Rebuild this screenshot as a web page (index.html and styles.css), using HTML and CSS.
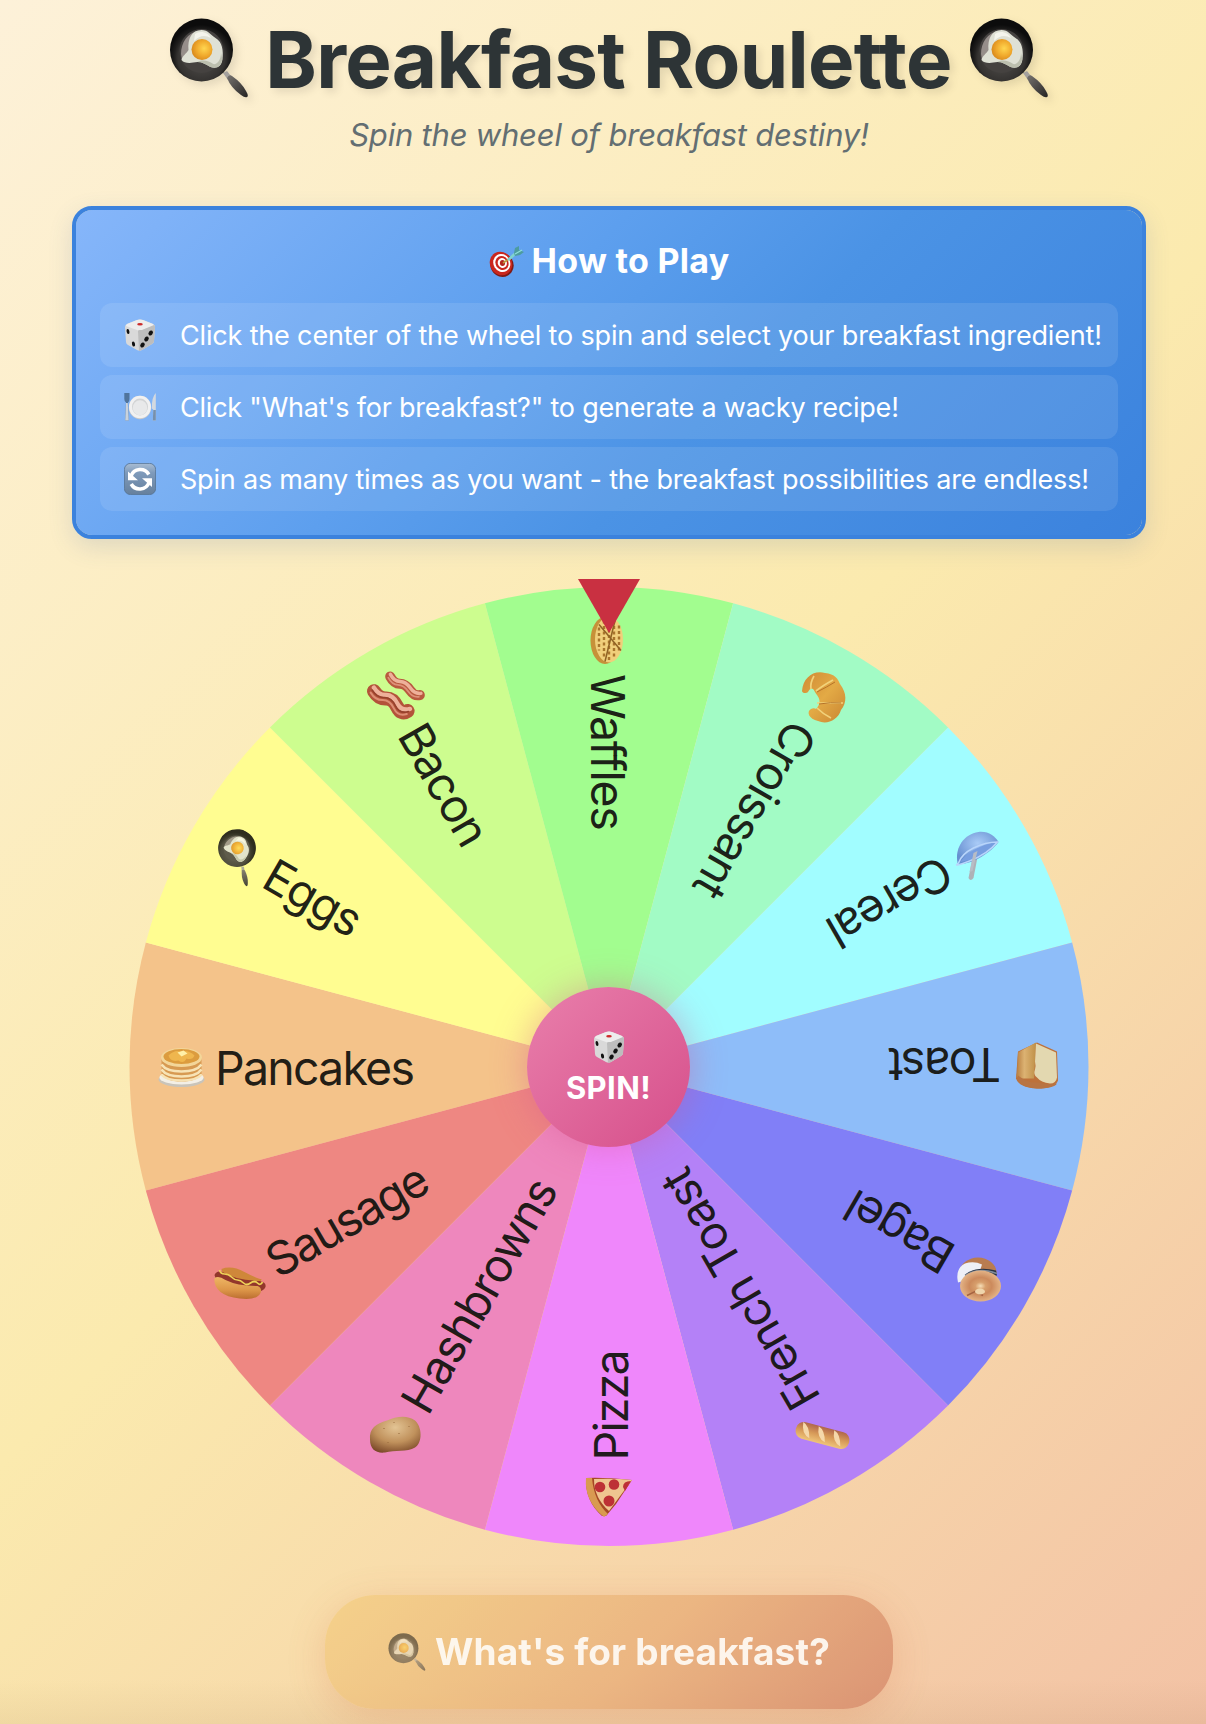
FILE: index.html
```html
<!DOCTYPE html>
<html lang="en">
<head>
<meta charset="utf-8">
<title>Breakfast Roulette</title>
<link rel="stylesheet" href="styles.css">
</head>
<body>
<svg class="sprite" aria-hidden="true">
  <defs>
    <radialGradient id="yolk" cx=".6" cy=".45" r=".6"><stop offset="0" stop-color="#ffd650"/><stop offset=".6" stop-color="#f0a92c"/><stop offset="1" stop-color="#d98a1e"/></radialGradient>
    <radialGradient id="iron" cx=".5" cy=".62" r=".52"><stop offset="0" stop-color="#55524f"/><stop offset=".72" stop-color="#353331"/><stop offset=".84" stop-color="#1f1e1d"/><stop offset="1" stop-color="#0c0c0c"/></radialGradient>
    <linearGradient id="blueTile" x1="0" y1="0" x2="0" y2="1"><stop offset="0" stop-color="#a9bdd3"/><stop offset=".3" stop-color="#7e9abb"/><stop offset="1" stop-color="#66809d"/></linearGradient>
    <linearGradient id="crust" x1="0" y1="0" x2="1" y2="1"><stop offset="0" stop-color="#d08a34"/><stop offset=".5" stop-color="#e3aa45"/><stop offset="1" stop-color="#c98532"/></linearGradient>
    <radialGradient id="brolly" cx=".5" cy=".35" r=".6"><stop offset="0" stop-color="#a9cbf7"/><stop offset="1" stop-color="#668fd0"/></radialGradient>
    <radialGradient id="spud" cx=".5" cy=".3" r=".75"><stop offset="0" stop-color="#e3c494"/><stop offset=".55" stop-color="#c0915c"/><stop offset="1" stop-color="#7a4828"/></radialGradient>
    <radialGradient id="bagelTop" cx=".5" cy=".5" r=".5"><stop offset="0" stop-color="#f6dfb8"/><stop offset=".25" stop-color="#d79f6c"/><stop offset=".55" stop-color="#cc8a5c"/><stop offset="1" stop-color="#e4b487"/></radialGradient>
    <linearGradient id="loaf" x1="0" y1="0" x2="0" y2="1"><stop offset="0" stop-color="#b0674a"/><stop offset=".5" stop-color="#d79a58"/><stop offset="1" stop-color="#efc479"/></linearGradient>
    <linearGradient id="bun" x1="0" y1="0" x2="0" y2="1"><stop offset="0" stop-color="#efb765"/><stop offset=".6" stop-color="#dc9548"/><stop offset="1" stop-color="#bb6d30"/></linearGradient>
    <linearGradient id="side" x1="0" y1="0" x2="1" y2="0"><stop offset="0" stop-color="#b87f42"/><stop offset=".4" stop-color="#dcb272"/><stop offset="1" stop-color="#bf9048"/></linearGradient>
    <linearGradient id="grip" x1="0" y1="0" x2="1" y2="1"><stop offset="0" stop-color="#77736f"/><stop offset="1" stop-color="#242323"/></linearGradient>
  </defs>

  <symbol id="pan" viewBox="0 0 80 80">
    <path d="M54 55l4-2 4 5-3 4z" fill="#a3a09d"/>
    <path d="M58 60q2-4 5-2 10 7 14 15 3 5 1 6-2 1-6-2-10-7-14-17z" fill="url(#grip)"/>
    <circle cx="32.500" cy="32" r="31.500" fill="url(#iron)"/>
    <circle cx="32.500" cy="33" r="22" fill="#454240"/>
    <path d="M12 36c0-12 7-21 17-23-7 6-7 10-8 17-1 5-6 7-8 12z" fill="#968e8a"/>
    <path d="M12.500 42c1-5 5-6 7-10-1-11 3-20 13-20 7 0 9 5 14 8 7 4 8 13 7 21-1 8-6 10-12 8-5-3-8-5-13-5-6 1-13 2-16-2z" fill="#dfe1d5"/>
    <path d="M26 16c5-4 13-2 16 4-6-3-11-3-17 3z" fill="#f5f5ed"/>
    <path d="M44 46c4 1 8-4 8-11l1.300 6c-1 8-6 10-12 8-5-3-8-5-13-5 6-3 11-1 16 2z" fill="#bcbfae"/>
    <circle cx="33" cy="31.500" r="10.500" fill="url(#yolk)"/>
  </symbol>

  <symbol id="die" viewBox="0 0 32 32">
    <path d="M1 8Q1 6 3 5L13 1q3-1 6 0l10 4q2 1 2 3l-1 14q0 2-2 3l-10 6q-3 1-5 0L4 26q-2-1-2-3z" fill="#d9d9d9"/>
    <path d="M2 7q0-1 1-2L13 1q3-1 6 0l10 4q1 1 1 2L18 11q-3 1-5 0z" fill="#ededed"/>
    <path d="M14 12q0-1 2-1l2 0 12-5q1 1 1 2l-1 14q0 2-2 3l-10 6-3 1z" fill="#bdbdbd"/>
    <ellipse cx="16" cy="5.300" rx="2.800" ry="1.300" fill="#cc2b2b"/>
    <ellipse cx="4" cy="12.500" rx="1.400" ry="2.500" fill="#111" transform="rotate(-12 4 12.500)"/>
    <ellipse cx="9.500" cy="25" rx="1.500" ry="2.600" fill="#111" transform="rotate(-15 9.500 25)"/>
    <ellipse cx="26.700" cy="14" rx="2" ry="2.700" fill="#111" transform="rotate(35 26.700 14)"/>
    <ellipse cx="22.500" cy="20" rx="2" ry="2.700" fill="#111" transform="rotate(35 22.500 20)"/>
    <ellipse cx="18.500" cy="26" rx="2" ry="2.700" fill="#111" transform="rotate(35 18.500 26)"/>
  </symbol>

  <symbol id="plate" viewBox="0 0 32 32">
    <path d="M.3 2h5.200v6q0 2.500-1.500 3.500l.8 18H1.200L2 11.500Q.3 10.500.3 8z" fill="#50749c"/>
    <path d="M2 12h1.800l1 17.500H1.200z" fill="#c9d2dc"/>
    <path d="M31.800 2v27.500h-3l.5-11-1.500-1q0-12 4-15.500z" fill="#d3d9e0"/>
    <path d="M31.800 19v10.500h-3l.5-10.500z" fill="#7690ad"/>
    <ellipse cx="16" cy="16.500" rx="11.200" ry="11.800" fill="#c9c9c9"/>
    <ellipse cx="16" cy="16" rx="11" ry="11.300" fill="#f1f1f1"/>
    <ellipse cx="16" cy="16" rx="8" ry="8.500" fill="#d2d4d5"/>
    <ellipse cx="16" cy="16.700" rx="7.200" ry="7.500" fill="#e8e9ea"/>
  </symbol>

  <symbol id="refresh" viewBox="0 0 32 32">
    <rect x=".4" y=".4" width="31.200" height="31.200" rx="6" fill="url(#blueTile)" stroke="#56718e" stroke-width=".8"/>
    <path d="M7 13A9.800 9.800 0 0 1 24.800 11.500" fill="none" stroke="#fff" stroke-width="3.600"/>
    <path d="M25 19.500A9.800 9.800 0 0 1 7.200 21" fill="none" stroke="#fff" stroke-width="3.600"/>
    <path d="M4 8.500V17.300H14z" fill="#fff"/>
    <path d="M28 24V15.200H18z" fill="#fff"/>
  </symbol>

  <symbol id="target" viewBox="0 0 35 31">
    <ellipse cx="13" cy="19" rx="11.500" ry="12" fill="#7f1a15" transform="rotate(-30 13 19)"/>
    <ellipse cx="12" cy="17.500" rx="11" ry="12" fill="#c9271d" transform="rotate(-30 12 17.500)"/>
    <ellipse cx="12.800" cy="17" rx="8.300" ry="9.300" fill="#fff" transform="rotate(-30 12.800 17)"/>
    <ellipse cx="13" cy="17" rx="6.400" ry="7.200" fill="#c9271d" transform="rotate(-30 13 17)"/>
    <ellipse cx="13.300" cy="17" rx="4.500" ry="5" fill="#fff" transform="rotate(-30 13.300 17)"/>
    <ellipse cx="13.500" cy="17" rx="2.600" ry="3" fill="#b3271f"/>
    <path d="M14 17l6-4" stroke="#bd9a3d" stroke-width="1.600"/>
    <path d="M18 13l8-7 2 2-8 7z" fill="#7fd3cf"/>
    <path d="M25 7l1-5 4-2 0 4 5 2-4 3-5 1z" fill="#4d9c9f"/>
    <path d="M26 8l7-4" stroke="#8de0d8" stroke-width="1.200"/>
  </symbol>
</svg>

<main class="page">
  <header class="header">
    <h1 class="title">
      <svg class="title-icon"><use href="#pan"/></svg>
      <span class="title-text">Breakfast Roulette</span>
      <svg class="title-icon"><use href="#pan"/></svg>
    </h1>
    <p class="subtitle">Spin the wheel of breakfast destiny!</p>
  </header>

  <section class="guide">
    <h2 class="guide-title"><svg class="guide-target"><use href="#target"/></svg><span>How to Play</span></h2>
    <ul class="steps">
      <li class="step"><svg class="step-icon"><use href="#die"/></svg><span class="step-one">Click the center of the wheel to spin and select your breakfast ingredient!</span></li>
      <li class="step"><svg class="step-icon"><use href="#plate"/></svg><span class="step-two">Click "What's for breakfast?" to generate a wacky recipe!</span></li>
      <li class="step"><svg class="step-icon"><use href="#refresh"/></svg><span class="step-three">Spin as many times as you want - the breakfast possibilities are endless!</span></li>
    </ul>
  </section>

  <section class="wheel">
    <svg class="wheel-disc" viewBox="-480 -479.500 960 959">
      <defs><path id="slice" d="M0 0L-463.160 124.100A479.500 479.500 0 0 1-463.160-124.100z"/></defs>
      <use href="#slice" fill="#f4c38a"/>
      <use href="#slice" fill="#fffd91" transform="rotate(30)"/>
      <use href="#slice" fill="#cdfd8f" transform="rotate(60)"/>
      <use href="#slice" fill="#a2fd8f" transform="rotate(90)"/>
      <use href="#slice" fill="#a2fbc5" transform="rotate(120)"/>
      <use href="#slice" fill="#a1fdff" transform="rotate(150)"/>
      <use href="#slice" fill="#8ebdf9" transform="rotate(180)"/>
      <use href="#slice" fill="#817ff7" transform="rotate(210)"/>
      <use href="#slice" fill="#b481f7" transform="rotate(240)"/>
      <use href="#slice" fill="#ef87fb" transform="rotate(270)"/>
      <use href="#slice" fill="#ee87bd" transform="rotate(300)"/>
      <use href="#slice" fill="#ee8782" transform="rotate(330)"/>

      <g class="labels">
        <text class="tight" x="-394" y="18.500">Pancakes</text>
        <text x="-393" y="18.500" transform="rotate(30)">Eggs</text>
        <text x="-393" y="18.500" transform="rotate(60)">Bacon</text>
        <text x="-392.500" y="18.500" transform="rotate(90)">Waffles</text>
        <text x="-393" y="18.500" transform="rotate(120)">Croissant</text>
        <text x="-393" y="18.500" transform="rotate(150)">Cereal</text>
        <text class="tight" x="-392" y="18.500" transform="rotate(180)">Toast</text>
        <text x="-392.500" y="18.500" transform="rotate(210)">Bagel</text>
        <text x="-393" y="18.500" transform="rotate(240)">French Toast</text>
        <text class="tight" x="-394" y="18.500" transform="rotate(270)">Pizza</text>
        <text x="-394" y="18.500" transform="rotate(300)">Hashbrowns</text>
        <text class="tight" x="-393" y="18.500" transform="rotate(330)">Sausage</text>
      </g>

      <!-- pancakes -->
      <g transform="translate(-427.500 0)">
        <ellipse cx="0" cy="13" rx="23" ry="7.500" fill="#c9c4ba"/><ellipse cx="0" cy="11" rx="22" ry="7" fill="#f3efe6"/>
        <path d="M-20-8v15q4 8 20 8t20-8v-15z" fill="#d79a52"/>
        <path d="M-20-2q5 7 20 7t20-7M-20 3q5 7 20 7t20-7M-20 8q5 6 20 6t20-6" fill="none" stroke="#f7e3b5" stroke-width="2.600"/>
        <ellipse cx="0" cy="-9" rx="20.500" ry="9.500" fill="#f3d699"/><ellipse cx="0" cy="-10" rx="18" ry="7.500" fill="#dc9c3e"/>
        <path d="M-13-11q6-6 12-4 8-2 14 4-2 5-8 3-3 6-8 2-8 2-10-5z" fill="#efb64e"/><path d="M-4-14l6-2 4 3-6 3z" fill="#fff0a8"/>
      </g>
      <!-- eggs -->
      <g transform="translate(-370.500 -212) rotate(30) scale(.6)"><svg x="-40" y="-40" width="80" height="80" opacity=".86"><use href="#pan"/></svg></g>
      <!-- bacon -->
      <g transform="translate(-213 -371) rotate(32)" stroke-linecap="round" fill="none">
        <path d="M-15-13q7 4 12 1t12 0 11-1" stroke="#b9593f" stroke-width="10"/>
        <path d="M-16-15q7 4 12 1t12 0 12-1" stroke="#eeb09a" stroke-width="3.500"/>
        <path d="M-16-11q7 4 12 1t12 0 12-1" stroke="#dd9079" stroke-width="1.800"/>
        <path d="M-21 8q8 4 14 0t14 1 11-2" stroke="#b3533a" stroke-width="14"/>
        <path d="M-23 5q8 4 14 0t14 1 14-2" stroke="#eeb09a" stroke-width="4.500"/>
        <path d="M-23 11q8 4 14 0t14 1 14-2" stroke="#dd8e74" stroke-width="2"/>
        <path d="M-23 8q8 4 14 0t14 1 14-2" stroke="#96402c" stroke-width="1.600"/>
      </g>
      <!-- waffle -->
      <g transform="translate(-2 -426)">
        <ellipse cx="-2" cy="0" rx="14.500" ry="23.500" fill="#c69139"/><ellipse cx="2" cy="-1" rx="14" ry="23" fill="#f0cf7b"/>
        <path d="M-8-13v23M-3-20v38M2-22v42M7-20v38M12-15v26" stroke="#a8752c" stroke-width="2.400" stroke-dasharray="3 2.500"/>
        <path d="M-8-16l22 26M8-20l-10 41" stroke="#8f6224" stroke-width="1.500"/>
      </g>
      <!-- croissant -->
      <g transform="translate(214 -369.500)">
        <path d="M-21-6C-20-19-10-27 2-24 12-23 15-18 17-13 24-4 24 6 18 13 15 23 4 28-5 24-14 22-17 15-12 12-8 10-8 13-6 11 0 3-6-1-8-5-11-12-14-7-15-5-17-3-21-4-21-6z" fill="url(#crust)"/>
        <path d="M-9-21q-4 7-3 13M10-17Q-1-11-7-6M20 6H-6M8 21q-8-4-14-10" fill="none" stroke="#f2d27a" stroke-width="1.700"/>
        <path d="M-6-5Q4-10 12-15M-4 7q12-2 22-1" fill="none" stroke="#b67429" stroke-width="1"/>
      </g>
      <!-- cereal -->
      <g transform="translate(368.500 -210.500)">
        <path d="M-4-2l5-2-5 26q-3 4-5 0z" fill="#aeb1b7"/>
        <path d="M-20 7C-23-9-13-22 1-24 11-25 17-20 21-14 14-4-4 8-18 8z" fill="url(#brolly)"/>
        <path d="M-17 6Q-13-1-2-7T18-13Q10-3-4 3z" fill="#779ee0"/>
        <path d="M-19 7Q-16-2-4-8T20-14Q10-2-8 5T-19 7" fill="none" stroke="#b9d5fb" stroke-width="1.500"/>
        <path d="M-4-3l4-2-5 20-3 1z" fill="#b8bcc5"/>
      </g>
      <!-- toast -->
      <g transform="translate(428 -1)">
        <path d="M-19-14L0-23 20-14 21 15Q18 23 0 23-18 22-21 13z" fill="#bd713b"/>
        <path d="M-19-13L-1-23-3 13-19 13q-2-2-1-5z" fill="url(#side)"/>
        <path d="M-19 10q10 8 20 7 12 3 19 1-3 5-20 5-16-1-20-9z" fill="#b87443"/>
        <path d="M-1-22L19-13 20 12q-1 6-7 6-9-1-13-6-4-3-2-8 1-4 0-8z" fill="#e3d8b0"/>
      </g>
      <!-- bagel -->
      <g transform="translate(370 213)">
        <ellipse cx="-1" cy="-7" rx="18.500" ry="15" fill="#b97c50"/>
        <path d="M-21 3q-3-14 7-19 9-3 17 1l-4 12z" fill="#eef0f7"/>
        <path d="M-14-5Q-2-14 17-9l1 5-28 3z" fill="#293344"/><path d="M-14-4Q0-13 18-6" fill="none" stroke="#7c8999" stroke-width="1.500"/>
        <ellipse cx="1.500" cy="6.500" rx="20.500" ry="15.500" fill="url(#bagelTop)"/><path d="M-12 16l8-4 8 4" stroke="#a66341" fill="none" stroke-width="1.500"/><ellipse cx="1" cy="12" rx="5" ry="3" fill="#efd5ac"/>
      </g>
      <!-- french toast -->
      <g transform="translate(213.500 369) rotate(15)">
        <rect x="-27.500" y="-8.500" width="55" height="17" rx="8" fill="url(#loaf)"/>
        <path d="M-22-8q7 2 10 14-9-2-10-14zM-6-8q7 2 10 14-9-2-10-14zM10-8q7 2 10 14-9-2-10-14z" fill="#f5d8aa"/>
      </g>
      <!-- pizza -->
      <g transform="translate(0 430.500)">
        <path d="M-23-19Q-7-20 23-17L7 7-3 19-7 19Q-24 4-23-19z" fill="#a54825"/>
        <path d="M-23-19h6Q-15 4-1 17l-4 3Q-25 4-23-19z" fill="#d99a51"/>
        <path d="M-15-18Q5-19 23-17L0 14Q-15 1-15-18z" fill="#efc590"/>
        <g fill="#bd3035"><circle cx="-9" cy="-10" r="5.300"/><circle cx="5" cy="-12.500" r="5.300"/><path d="M14-10q0-6 8-6l-6 10z"/><circle cx="0" cy="4" r="5.500"/></g>
      </g>
      <!-- hashbrowns -->
      <g transform="translate(-214 368)">
        <path d="M-25 5C-26-6-19-11-8-14 1-18 12-20 20-14 27-8 28 8 20 13 12 18 0 15-10 18-19 19-25 15-25 5z" fill="url(#spud)"/>
        <g fill="#8d6034"><circle cx="-11" cy="-6" r=".6"/><circle cx="4" cy="-1" r=".6"/><circle cx="-1" cy="-12" r=".5"/><circle cx="14" cy="-8" r=".5"/><circle cx="-7" cy="8" r=".5"/></g>
      </g>
      <!-- sausage -->
      <g transform="translate(-369.500 217.500)">
        <path d="M-18-15Q-8-19 5-12T22-5L20 3-16-6z" fill="#cf873a"/>
        <path d="M-25-9q2-5 8-3 12 8 37 9 7 1 6 6-2 5-9 4-27-2-40-10z" fill="#93372b"/>
        <path d="M-25-6q4-3 11 2 12 6 32 6 5 2 3 7-3 6-14 6-29-1-32-17z" fill="url(#bun)"/>
        <path d="M-20-14q1 4 5 4t7 3 6 3 6 3 7 0 7 0 5-1" fill="none" stroke="#eed258" stroke-width="1.700"/>
      </g>
    </svg>
    <div class="pointer"></div>
    <button class="spin"><svg class="spin-icon"><use href="#die"/></svg><span>SPIN!</span></button>
  </section>

  <button class="recipe"><svg class="recipe-icon"><use href="#pan"/></svg><span>What's for breakfast?</span></button>
</main>
</body>
</html>
```
FILE: styles.css
```css
* { box-sizing: border-box; }

body {
  margin: 0;
  height: 1724px;
  overflow: hidden;
  font-family: Inter, "Liberation Sans", sans-serif;
  background: linear-gradient(135deg, #fdf1d9 0%, #fbeaae 50%, #f3c2a5 100%);
}

.sprite { position: absolute; width: 0; height: 0; }

.page {
  display: flex;
  flex-direction: column;
  align-items: center;
  height: 1724px;
  padding: 12px 60px 0 72px;
  background: linear-gradient(to top, rgba(110, 80, 30, .07), transparent 45px);
}

.header { display: flex; flex-direction: column; align-items: center; }

.title {
  display: flex;
  gap: 17px;
  margin: 0;
  color: #2d3436;
  font-size: 78px;
  font-weight: 700;
  line-height: 96px;
  white-space: nowrap;
  text-shadow: 4px 4px 8px rgba(0, 0, 0, .1);
}
.title-text { margin-left: -1px; letter-spacing: -.7px; }
.title-icon {
  width: 80px;
  height: 80px;
  margin-top: 6px;
  filter: drop-shadow(4px 4px 4px rgba(0, 0, 0, .1));
}

.subtitle {
  margin: 7px 0 0;
  color: #636e72;
  font-size: 31px;
  font-style: italic;
  line-height: 40px;
  letter-spacing: -.21px;
  white-space: nowrap;
}

.guide {
  width: 1074px;
  margin-top: 51px;
  padding: 27px 24px 24px;
  border: 4px solid #3b82dd;
  border-radius: 20px;
  color: #fff;
  background: linear-gradient(135deg, #86b6fa 0%, #5d9fee 40%, #4b93e5 60%, #3b82dd 100%) padding-box;
  box-shadow: 0 8px 24px rgba(60, 100, 160, .16);
}
.guide-title {
  display: flex;
  justify-content: center;
  align-items: center;
  gap: 8px;
  margin: 0 0 18px;
  font-size: 34px;
  font-weight: 700;
  line-height: 48px;
  letter-spacing: .3px;
}
.guide-target { width: 35px; height: 31px; }

.steps { display: grid; gap: 8px; margin: 0; padding: 0; list-style: none; }
.step {
  display: flex;
  align-items: center;
  gap: 24px;
  height: 64px;
  padding-left: 24px;
  border-radius: 12px;
  font-size: 27px;
  background: rgba(255, 255, 255, .1);
  white-space: nowrap;
}
.step-icon { flex: none; width: 32px; height: 32px; }
.step-one { letter-spacing: -.165px; }
.step-two { letter-spacing: -.215px; }
.step-three { letter-spacing: -.2px; }

.wheel { position: relative; width: 960px; height: 959px; margin-top: 48px; }
.wheel-disc { display: block; width: 960px; height: 959px; overflow: visible; }
.labels { font-size: 46.500px; fill: #14140f; fill-opacity: .95; letter-spacing: -1.400px; }
.tight { letter-spacing: -1.800px; }

.pointer {
  position: absolute;
  top: -8px;
  left: 449px;
  width: 62px;
  height: 54px;
  background: #c93041;
  clip-path: polygon(0 0, 100% 0, 50% 100%);
}

.spin {
  position: absolute;
  top: 400px;
  left: 398px;
  display: flex;
  flex-direction: column;
  align-items: center;
  width: 163px;
  height: 160px;
  padding: 44px 0 0;
  border: 0;
  border-radius: 50%;
  color: #fff;
  font: 700 31px/38px Inter, sans-serif;
  letter-spacing: .4px;
  background: linear-gradient(135deg, #e97fab, #d64f8b);
  box-shadow: 0 0 36px rgba(214, 79, 139, .4);
}
.spin-icon { flex: none; width: 32px; height: 32px; margin-bottom: 6px; }

.recipe {
  display: flex;
  align-items: center;
  justify-content: center;
  gap: 9px;
  flex: none;
  width: 568px;
  height: 114px;
  margin-top: 49px;
  padding: 0;
  border: 0;
  border-radius: 50px;
  color: #fff;
  font: 700 37px/48px Inter, sans-serif;
  letter-spacing: .15px;
  background: linear-gradient(135deg, #f4cf83, #e9ae78 55%, #d48567);
  box-shadow: 0 8px 40px rgba(210, 110, 70, .3);
  opacity: .78;
}
.recipe-icon { width: 38px; height: 38px; opacity: .65; }
```
